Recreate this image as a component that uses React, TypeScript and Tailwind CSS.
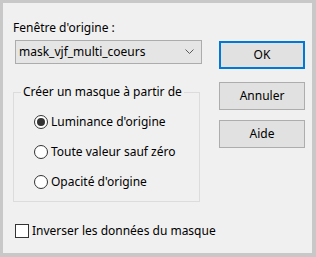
import React from 'react';

const font = { fontFamily: '"Noto Sans", "Open Sans", sans-serif' };

function Radio({ checked, label }: { checked?: boolean; label: string }) {
  return (
    <label className="flex items-center h-[16px] whitespace-nowrap">
      <span className="shrink-0 w-[14px] h-[14px] rounded-full border border-[#333] bg-white flex items-center justify-center">
        {checked && <span className="w-[8px] h-[8px] rounded-full bg-[#333]" />}
      </span>
      <span className="ml-[3px]">{label}</span>
    </label>
  );
}

function Btn({ children, primary }: { children: React.ReactNode; primary?: boolean }) {
  return (
    <button
      className={`w-[86px] h-[28px] bg-[#e1e1e1] text-[12px] text-black ${primary ? 'border-2 border-[#0078d7]' : 'border border-[#adadad]'}`}
    >
      {children}
    </button>
  );
}

export default function App() {
  return (
    <div className="w-[316px] h-[257px] bg-[#c8c8c8] pt-[3px] pl-[3px] pr-[4px] pb-[4px]" style={font}>
      <div className="w-full h-full bg-[#f0f0f0] flex text-[12px] leading-[16px] text-black">
        {/* left column */}
        <div className="shrink-0 flex flex-col pl-[10px] w-[206px] whitespace-nowrap">
          <div className="mt-[17px]">Fenêtre d'origine :</div>
          <div className="mt-[4px] ml-[2px] w-[187px] h-[24px] bg-[#e5e5e5] border border-[#acacac] flex items-center pl-[3px] pr-[7px]">
            <span className="flex-1">mask_vjf_multi_coeurs</span>
            <svg width="9" height="6" viewBox="0 0 9 6">
              <path d="M0.5 0.5 L4.5 4.5 L8.5 0.5" fill="none" stroke="#5a5a5a" strokeWidth="1" />
            </svg>
          </div>
          <fieldset className="mt-[20px] w-[187px] h-[118px] border border-[#dcdcdc]">
            <legend className="ml-[7px] px-[2px]">Créer un masque à partir de</legend>
            <div className="flex flex-col gap-[14px] mt-[14px] pl-[20px]">
              <Radio checked label="Luminance d'origine" />
              <Radio label="Toute valeur sauf zéro" />
              <Radio label="Opacité d'origine" />
            </div>
          </fieldset>
          <label className="flex items-center mt-[21px] ml-[2px]">
            <span className="shrink-0 w-[14px] h-[14px] border border-[#333] bg-white" />
            <span className="ml-[3px]">Inverser les données du masque</span>
          </label>
        </div>
        {/* right column */}
        <div className="flex flex-col ml-[10px] pt-[38px]">
          <Btn primary>OK</Btn>
          <div className="mt-[13px]">
            <Btn>Annuler</Btn>
          </div>
          <div className="mt-[10px]">
            <Btn>Aide</Btn>
          </div>
        </div>
      </div>
    </div>
  );
}
